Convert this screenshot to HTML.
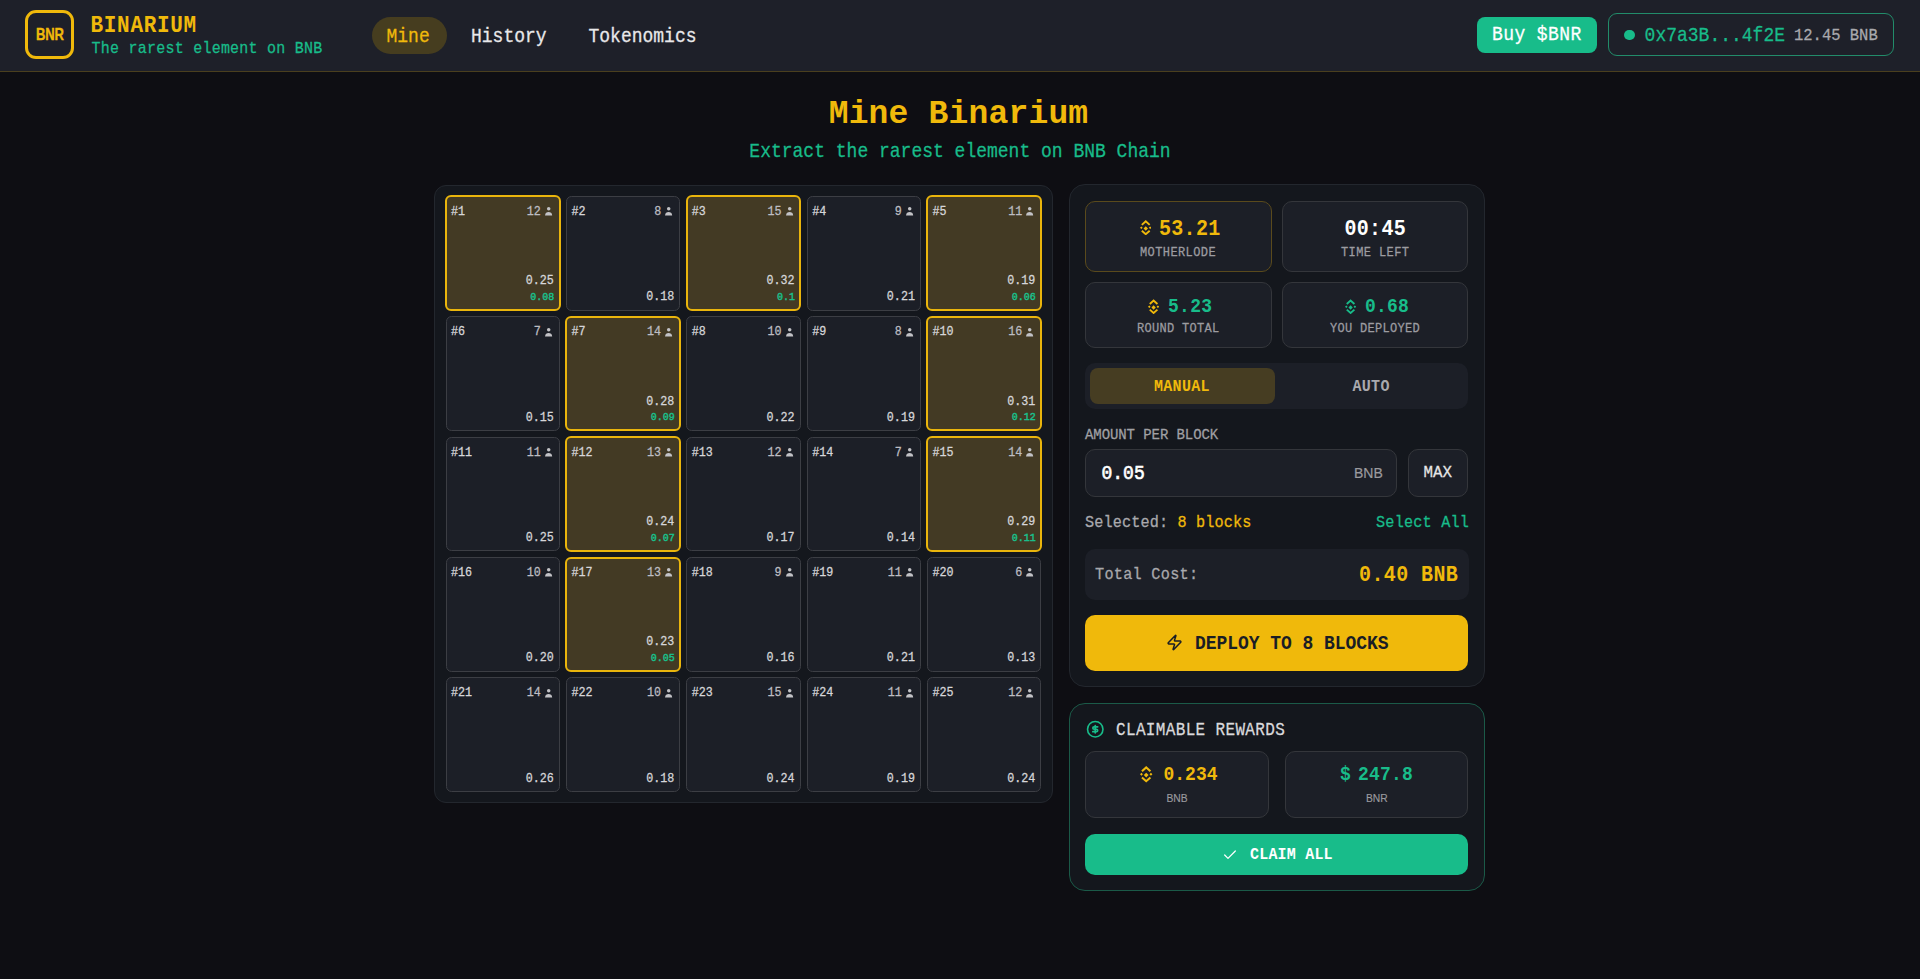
<!DOCTYPE html>
<html><head><meta charset="utf-8">
<style>
*{box-sizing:border-box;margin:0;padding:0}
html,body{width:1920px;height:979px;overflow:hidden;background:#0e0e13;font-family:"Liberation Mono",monospace;color:#e6e6e6}
</style></head><body>
<div style="position:absolute;left:0px;top:0px;width:1920px;height:71px;background:#1e2029;border-radius:0px;border-bottom:1px solid #4a3f1e;box-sizing:content-box;"></div>
<div style="position:absolute;left:25.3px;top:10px;width:48.7px;height:49px;background:transparent;border-radius:11px;border:3px solid #f0b90b;"></div>
<div style="position:absolute;top:29.30px;font-size:13px;color:#f0b90b;font-family:'Liberation Sans',sans-serif;white-space:nowrap;line-height:1;left:36px;font-weight:bold;letter-spacing:-0.2px;transform:scaleY(1.25);transform-origin:0 11.00px;-webkit-text-stroke:0.3px #f0b90b;">BNR</div>
<div style="position:absolute;top:16.01px;font-size:21px;color:#f0b90b;font-family:'Liberation Mono',monospace;white-space:nowrap;line-height:1;left:90.5px;font-weight:bold;letter-spacing:0.7px;transform:scaleY(1.1);transform-origin:0 16.09px;">BINARIUM</div>
<div style="position:absolute;top:41.71px;font-size:15px;color:#18bc8a;font-family:'Liberation Mono',monospace;white-space:nowrap;line-height:1;left:91.5px;letter-spacing:0.24px;transform:scaleY(1.1);transform-origin:0 11.49px;-webkit-text-stroke:0.25px #18bc8a;">The rarest element on BNB</div>
<div style="position:absolute;left:372px;top:17px;width:75px;height:37px;background:#463d1f;border-radius:18.5px;"></div>
<div style="position:absolute;top:28.11px;font-size:18px;color:#f0b90b;font-family:'Liberation Mono',monospace;white-space:nowrap;line-height:1;left:386.5px;transform:scaleY(1.1);transform-origin:0 13.79px;-webkit-text-stroke:0.25px #f0b90b;">Mine</div>
<div style="position:absolute;top:28.11px;font-size:18px;color:#e8e8ea;font-family:'Liberation Mono',monospace;white-space:nowrap;line-height:1;left:471px;transform:scaleY(1.1);transform-origin:0 13.79px;-webkit-text-stroke:0.25px #e8e8ea;">History</div>
<div style="position:absolute;top:28.11px;font-size:18px;color:#e8e8ea;font-family:'Liberation Mono',monospace;white-space:nowrap;line-height:1;left:588.5px;transform:scaleY(1.1);transform-origin:0 13.79px;-webkit-text-stroke:0.25px #e8e8ea;">Tokenomics</div>
<div style="position:absolute;left:1477px;top:17px;width:120px;height:36px;background:#18bc8a;border-radius:8px;"></div>
<div style="position:absolute;top:26.31px;font-size:18px;color:#ffffff;font-family:'Liberation Mono',monospace;white-space:nowrap;line-height:1;left:1492px;letter-spacing:0.4px;transform:scaleY(1.1);transform-origin:0 13.79px;-webkit-text-stroke:0.25px #ffffff;">Buy $BNR</div>
<div style="position:absolute;left:1608px;top:13px;width:286px;height:43px;background:transparent;border-radius:9px;border:1px solid #228c6a;"></div>
<div style="position:absolute;left:1624px;top:29.5px;width:10.5px;height:10.5px;background:#18bc8a;border-radius:5.25px;"></div>
<div style="position:absolute;top:26.71px;font-size:18px;color:#18bc8a;font-family:'Liberation Mono',monospace;white-space:nowrap;line-height:1;left:1644.6px;transform:scaleY(1.1);transform-origin:0 13.79px;-webkit-text-stroke:0.25px #18bc8a;">0x7a3B...4f2E</div>
<div style="position:absolute;top:28.63px;font-size:15.5px;color:#a9a9ad;font-family:'Liberation Mono',monospace;white-space:nowrap;line-height:1;left:1794px;transform:scaleY(1.1);transform-origin:0 11.87px;-webkit-text-stroke:0.25px #a9a9ad;">12.45 BNB</div>
<div style="position:absolute;top:98.32px;font-size:33px;color:#f0b90b;font-family:'Liberation Mono',monospace;white-space:nowrap;line-height:1;left:0;right:0;text-align:center;font-weight:bold;letter-spacing:0.17px;margin-left:-3px;">Mine Binarium</div>
<div style="position:absolute;top:142.91px;font-size:18px;color:#18bc8a;font-family:'Liberation Mono',monospace;white-space:nowrap;line-height:1;left:0;right:0;text-align:center;transform:scaleY(1.1);transform-origin:0 13.79px;-webkit-text-stroke:0.25px #18bc8a;">Extract the rarest element on BNB Chain</div>
<div style="position:absolute;left:434px;top:185px;width:619px;height:618px;background:#14171d;border-radius:12px;border:1px solid #23272e;"></div>
<div style="position:absolute;left:444.95px;top:195.45px;width:115.69999999999999px;height:115.69999999999999px;background:#433a24;border-radius:6px;border:2px solid #eab50c;"></div>
<div style="position:absolute;top:206.84px;font-size:11.7px;color:#d6d6d9;font-family:'Liberation Mono',monospace;white-space:nowrap;line-height:1;left:451.1px;transform:scaleY(1.12);transform-origin:0 8.96px;-webkit-text-stroke:0.25px #d6d6d9;">#1</div>
<div style="position:absolute;top:206.84px;font-size:11.7px;color:#bdbdc2;font-family:'Liberation Mono',monospace;white-space:nowrap;line-height:1;left:526.76px;transform:scaleY(1.12);transform-origin:0 8.96px;-webkit-text-stroke:0.25px #bdbdc2;">12</div>
<svg style="position:absolute;left:545.0px;top:206.3px" width="8" height="10" viewBox="0 0 8 10"><circle cx="3.7" cy="2.7" r="1.75" fill="#c2c2c6"/><path d="M0 9.4 C0.3 6.8 1.6 5.9 3.6 5.9 C5.6 5.9 6.9 6.8 7.2 9.4 Z" fill="#c2c2c6"/></svg>
<div style="position:absolute;top:276.24px;font-size:11.7px;color:#d6d6d9;font-family:'Liberation Mono',monospace;white-space:nowrap;line-height:1;left:525.82px;transform:scaleY(1.12);transform-origin:0 8.96px;-webkit-text-stroke:0.25px #d6d6d9;">0.25</div>
<div style="position:absolute;top:292.94px;font-size:10px;color:#19c08d;font-family:'Liberation Mono',monospace;white-space:nowrap;line-height:1;left:530.3px;transform:scaleY(1.12);transform-origin:0 7.66px;-webkit-text-stroke:0.4px #19c08d;">0.08</div>
<div style="position:absolute;left:565.85px;top:196.0px;width:114.6px;height:114.6px;background:#1c1f27;border-radius:5.5px;border:1px solid #3c3e44;"></div>
<div style="position:absolute;top:206.84px;font-size:11.7px;color:#d6d6d9;font-family:'Liberation Mono',monospace;white-space:nowrap;line-height:1;left:571.45px;transform:scaleY(1.12);transform-origin:0 8.96px;-webkit-text-stroke:0.25px #d6d6d9;">#2</div>
<div style="position:absolute;top:206.84px;font-size:11.7px;color:#bdbdc2;font-family:'Liberation Mono',monospace;white-space:nowrap;line-height:1;left:654.13px;transform:scaleY(1.12);transform-origin:0 8.96px;-webkit-text-stroke:0.25px #bdbdc2;">8</div>
<svg style="position:absolute;left:665.35px;top:206.3px" width="8" height="10" viewBox="0 0 8 10"><circle cx="3.7" cy="2.7" r="1.75" fill="#c2c2c6"/><path d="M0 9.4 C0.3 6.8 1.6 5.9 3.6 5.9 C5.6 5.9 6.9 6.8 7.2 9.4 Z" fill="#c2c2c6"/></svg>
<div style="position:absolute;top:292.24px;font-size:11.7px;color:#d6d6d9;font-family:'Liberation Mono',monospace;white-space:nowrap;line-height:1;left:646.17px;transform:scaleY(1.12);transform-origin:0 8.96px;-webkit-text-stroke:0.25px #d6d6d9;">0.18</div>
<div style="position:absolute;left:685.65px;top:195.45px;width:115.69999999999999px;height:115.69999999999999px;background:#433a24;border-radius:6px;border:2px solid #eab50c;"></div>
<div style="position:absolute;top:206.84px;font-size:11.7px;color:#d6d6d9;font-family:'Liberation Mono',monospace;white-space:nowrap;line-height:1;left:691.8px;transform:scaleY(1.12);transform-origin:0 8.96px;-webkit-text-stroke:0.25px #d6d6d9;">#3</div>
<div style="position:absolute;top:206.84px;font-size:11.7px;color:#bdbdc2;font-family:'Liberation Mono',monospace;white-space:nowrap;line-height:1;left:767.46px;transform:scaleY(1.12);transform-origin:0 8.96px;-webkit-text-stroke:0.25px #bdbdc2;">15</div>
<svg style="position:absolute;left:785.7px;top:206.3px" width="8" height="10" viewBox="0 0 8 10"><circle cx="3.7" cy="2.7" r="1.75" fill="#c2c2c6"/><path d="M0 9.4 C0.3 6.8 1.6 5.9 3.6 5.9 C5.6 5.9 6.9 6.8 7.2 9.4 Z" fill="#c2c2c6"/></svg>
<div style="position:absolute;top:276.24px;font-size:11.7px;color:#d6d6d9;font-family:'Liberation Mono',monospace;white-space:nowrap;line-height:1;left:766.52px;transform:scaleY(1.12);transform-origin:0 8.96px;-webkit-text-stroke:0.25px #d6d6d9;">0.32</div>
<div style="position:absolute;top:292.94px;font-size:10px;color:#19c08d;font-family:'Liberation Mono',monospace;white-space:nowrap;line-height:1;left:777.0px;transform:scaleY(1.12);transform-origin:0 7.66px;-webkit-text-stroke:0.4px #19c08d;">0.1</div>
<div style="position:absolute;left:806.55px;top:196.0px;width:114.6px;height:114.6px;background:#1c1f27;border-radius:5.5px;border:1px solid #3c3e44;"></div>
<div style="position:absolute;top:206.84px;font-size:11.7px;color:#d6d6d9;font-family:'Liberation Mono',monospace;white-space:nowrap;line-height:1;left:812.15px;transform:scaleY(1.12);transform-origin:0 8.96px;-webkit-text-stroke:0.25px #d6d6d9;">#4</div>
<div style="position:absolute;top:206.84px;font-size:11.7px;color:#bdbdc2;font-family:'Liberation Mono',monospace;white-space:nowrap;line-height:1;left:894.83px;transform:scaleY(1.12);transform-origin:0 8.96px;-webkit-text-stroke:0.25px #bdbdc2;">9</div>
<svg style="position:absolute;left:906.05px;top:206.3px" width="8" height="10" viewBox="0 0 8 10"><circle cx="3.7" cy="2.7" r="1.75" fill="#c2c2c6"/><path d="M0 9.4 C0.3 6.8 1.6 5.9 3.6 5.9 C5.6 5.9 6.9 6.8 7.2 9.4 Z" fill="#c2c2c6"/></svg>
<div style="position:absolute;top:292.24px;font-size:11.7px;color:#d6d6d9;font-family:'Liberation Mono',monospace;white-space:nowrap;line-height:1;left:886.87px;transform:scaleY(1.12);transform-origin:0 8.96px;-webkit-text-stroke:0.25px #d6d6d9;">0.21</div>
<div style="position:absolute;left:926.35px;top:195.45px;width:115.69999999999999px;height:115.69999999999999px;background:#433a24;border-radius:6px;border:2px solid #eab50c;"></div>
<div style="position:absolute;top:206.84px;font-size:11.7px;color:#d6d6d9;font-family:'Liberation Mono',monospace;white-space:nowrap;line-height:1;left:932.5px;transform:scaleY(1.12);transform-origin:0 8.96px;-webkit-text-stroke:0.25px #d6d6d9;">#5</div>
<div style="position:absolute;top:206.84px;font-size:11.7px;color:#bdbdc2;font-family:'Liberation Mono',monospace;white-space:nowrap;line-height:1;left:1008.16px;transform:scaleY(1.12);transform-origin:0 8.96px;-webkit-text-stroke:0.25px #bdbdc2;">11</div>
<svg style="position:absolute;left:1026.4px;top:206.3px" width="8" height="10" viewBox="0 0 8 10"><circle cx="3.7" cy="2.7" r="1.75" fill="#c2c2c6"/><path d="M0 9.4 C0.3 6.8 1.6 5.9 3.6 5.9 C5.6 5.9 6.9 6.8 7.2 9.4 Z" fill="#c2c2c6"/></svg>
<div style="position:absolute;top:276.24px;font-size:11.7px;color:#d6d6d9;font-family:'Liberation Mono',monospace;white-space:nowrap;line-height:1;left:1007.22px;transform:scaleY(1.12);transform-origin:0 8.96px;-webkit-text-stroke:0.25px #d6d6d9;">0.19</div>
<div style="position:absolute;top:292.94px;font-size:10px;color:#19c08d;font-family:'Liberation Mono',monospace;white-space:nowrap;line-height:1;left:1011.7px;transform:scaleY(1.12);transform-origin:0 7.66px;-webkit-text-stroke:0.4px #19c08d;">0.06</div>
<div style="position:absolute;left:445.5px;top:316.35px;width:114.6px;height:114.6px;background:#1c1f27;border-radius:5.5px;border:1px solid #3c3e44;"></div>
<div style="position:absolute;top:327.19px;font-size:11.7px;color:#d6d6d9;font-family:'Liberation Mono',monospace;white-space:nowrap;line-height:1;left:451.1px;transform:scaleY(1.12);transform-origin:0 8.96px;-webkit-text-stroke:0.25px #d6d6d9;">#6</div>
<div style="position:absolute;top:327.19px;font-size:11.7px;color:#bdbdc2;font-family:'Liberation Mono',monospace;white-space:nowrap;line-height:1;left:533.78px;transform:scaleY(1.12);transform-origin:0 8.96px;-webkit-text-stroke:0.25px #bdbdc2;">7</div>
<svg style="position:absolute;left:545.0px;top:326.65px" width="8" height="10" viewBox="0 0 8 10"><circle cx="3.7" cy="2.7" r="1.75" fill="#c2c2c6"/><path d="M0 9.4 C0.3 6.8 1.6 5.9 3.6 5.9 C5.6 5.9 6.9 6.8 7.2 9.4 Z" fill="#c2c2c6"/></svg>
<div style="position:absolute;top:412.59px;font-size:11.7px;color:#d6d6d9;font-family:'Liberation Mono',monospace;white-space:nowrap;line-height:1;left:525.82px;transform:scaleY(1.12);transform-origin:0 8.96px;-webkit-text-stroke:0.25px #d6d6d9;">0.15</div>
<div style="position:absolute;left:565.3px;top:315.8px;width:115.69999999999999px;height:115.69999999999999px;background:#433a24;border-radius:6px;border:2px solid #eab50c;"></div>
<div style="position:absolute;top:327.19px;font-size:11.7px;color:#d6d6d9;font-family:'Liberation Mono',monospace;white-space:nowrap;line-height:1;left:571.45px;transform:scaleY(1.12);transform-origin:0 8.96px;-webkit-text-stroke:0.25px #d6d6d9;">#7</div>
<div style="position:absolute;top:327.19px;font-size:11.7px;color:#bdbdc2;font-family:'Liberation Mono',monospace;white-space:nowrap;line-height:1;left:647.11px;transform:scaleY(1.12);transform-origin:0 8.96px;-webkit-text-stroke:0.25px #bdbdc2;">14</div>
<svg style="position:absolute;left:665.35px;top:326.65px" width="8" height="10" viewBox="0 0 8 10"><circle cx="3.7" cy="2.7" r="1.75" fill="#c2c2c6"/><path d="M0 9.4 C0.3 6.8 1.6 5.9 3.6 5.9 C5.6 5.9 6.9 6.8 7.2 9.4 Z" fill="#c2c2c6"/></svg>
<div style="position:absolute;top:396.59px;font-size:11.7px;color:#d6d6d9;font-family:'Liberation Mono',monospace;white-space:nowrap;line-height:1;left:646.17px;transform:scaleY(1.12);transform-origin:0 8.96px;-webkit-text-stroke:0.25px #d6d6d9;">0.28</div>
<div style="position:absolute;top:413.29px;font-size:10px;color:#19c08d;font-family:'Liberation Mono',monospace;white-space:nowrap;line-height:1;left:650.65px;transform:scaleY(1.12);transform-origin:0 7.66px;-webkit-text-stroke:0.4px #19c08d;">0.09</div>
<div style="position:absolute;left:686.2px;top:316.35px;width:114.6px;height:114.6px;background:#1c1f27;border-radius:5.5px;border:1px solid #3c3e44;"></div>
<div style="position:absolute;top:327.19px;font-size:11.7px;color:#d6d6d9;font-family:'Liberation Mono',monospace;white-space:nowrap;line-height:1;left:691.8px;transform:scaleY(1.12);transform-origin:0 8.96px;-webkit-text-stroke:0.25px #d6d6d9;">#8</div>
<div style="position:absolute;top:327.19px;font-size:11.7px;color:#bdbdc2;font-family:'Liberation Mono',monospace;white-space:nowrap;line-height:1;left:767.46px;transform:scaleY(1.12);transform-origin:0 8.96px;-webkit-text-stroke:0.25px #bdbdc2;">10</div>
<svg style="position:absolute;left:785.7px;top:326.65px" width="8" height="10" viewBox="0 0 8 10"><circle cx="3.7" cy="2.7" r="1.75" fill="#c2c2c6"/><path d="M0 9.4 C0.3 6.8 1.6 5.9 3.6 5.9 C5.6 5.9 6.9 6.8 7.2 9.4 Z" fill="#c2c2c6"/></svg>
<div style="position:absolute;top:412.59px;font-size:11.7px;color:#d6d6d9;font-family:'Liberation Mono',monospace;white-space:nowrap;line-height:1;left:766.52px;transform:scaleY(1.12);transform-origin:0 8.96px;-webkit-text-stroke:0.25px #d6d6d9;">0.22</div>
<div style="position:absolute;left:806.55px;top:316.35px;width:114.6px;height:114.6px;background:#1c1f27;border-radius:5.5px;border:1px solid #3c3e44;"></div>
<div style="position:absolute;top:327.19px;font-size:11.7px;color:#d6d6d9;font-family:'Liberation Mono',monospace;white-space:nowrap;line-height:1;left:812.15px;transform:scaleY(1.12);transform-origin:0 8.96px;-webkit-text-stroke:0.25px #d6d6d9;">#9</div>
<div style="position:absolute;top:327.19px;font-size:11.7px;color:#bdbdc2;font-family:'Liberation Mono',monospace;white-space:nowrap;line-height:1;left:894.83px;transform:scaleY(1.12);transform-origin:0 8.96px;-webkit-text-stroke:0.25px #bdbdc2;">8</div>
<svg style="position:absolute;left:906.05px;top:326.65px" width="8" height="10" viewBox="0 0 8 10"><circle cx="3.7" cy="2.7" r="1.75" fill="#c2c2c6"/><path d="M0 9.4 C0.3 6.8 1.6 5.9 3.6 5.9 C5.6 5.9 6.9 6.8 7.2 9.4 Z" fill="#c2c2c6"/></svg>
<div style="position:absolute;top:412.59px;font-size:11.7px;color:#d6d6d9;font-family:'Liberation Mono',monospace;white-space:nowrap;line-height:1;left:886.87px;transform:scaleY(1.12);transform-origin:0 8.96px;-webkit-text-stroke:0.25px #d6d6d9;">0.19</div>
<div style="position:absolute;left:926.35px;top:315.8px;width:115.69999999999999px;height:115.69999999999999px;background:#433a24;border-radius:6px;border:2px solid #eab50c;"></div>
<div style="position:absolute;top:327.19px;font-size:11.7px;color:#d6d6d9;font-family:'Liberation Mono',monospace;white-space:nowrap;line-height:1;left:932.5px;transform:scaleY(1.12);transform-origin:0 8.96px;-webkit-text-stroke:0.25px #d6d6d9;">#10</div>
<div style="position:absolute;top:327.19px;font-size:11.7px;color:#bdbdc2;font-family:'Liberation Mono',monospace;white-space:nowrap;line-height:1;left:1008.16px;transform:scaleY(1.12);transform-origin:0 8.96px;-webkit-text-stroke:0.25px #bdbdc2;">16</div>
<svg style="position:absolute;left:1026.4px;top:326.65px" width="8" height="10" viewBox="0 0 8 10"><circle cx="3.7" cy="2.7" r="1.75" fill="#c2c2c6"/><path d="M0 9.4 C0.3 6.8 1.6 5.9 3.6 5.9 C5.6 5.9 6.9 6.8 7.2 9.4 Z" fill="#c2c2c6"/></svg>
<div style="position:absolute;top:396.59px;font-size:11.7px;color:#d6d6d9;font-family:'Liberation Mono',monospace;white-space:nowrap;line-height:1;left:1007.22px;transform:scaleY(1.12);transform-origin:0 8.96px;-webkit-text-stroke:0.25px #d6d6d9;">0.31</div>
<div style="position:absolute;top:413.29px;font-size:10px;color:#19c08d;font-family:'Liberation Mono',monospace;white-space:nowrap;line-height:1;left:1011.7px;transform:scaleY(1.12);transform-origin:0 7.66px;-webkit-text-stroke:0.4px #19c08d;">0.12</div>
<div style="position:absolute;left:445.5px;top:436.7px;width:114.6px;height:114.6px;background:#1c1f27;border-radius:5.5px;border:1px solid #3c3e44;"></div>
<div style="position:absolute;top:447.54px;font-size:11.7px;color:#d6d6d9;font-family:'Liberation Mono',monospace;white-space:nowrap;line-height:1;left:451.1px;transform:scaleY(1.12);transform-origin:0 8.96px;-webkit-text-stroke:0.25px #d6d6d9;">#11</div>
<div style="position:absolute;top:447.54px;font-size:11.7px;color:#bdbdc2;font-family:'Liberation Mono',monospace;white-space:nowrap;line-height:1;left:526.76px;transform:scaleY(1.12);transform-origin:0 8.96px;-webkit-text-stroke:0.25px #bdbdc2;">11</div>
<svg style="position:absolute;left:545.0px;top:447.0px" width="8" height="10" viewBox="0 0 8 10"><circle cx="3.7" cy="2.7" r="1.75" fill="#c2c2c6"/><path d="M0 9.4 C0.3 6.8 1.6 5.9 3.6 5.9 C5.6 5.9 6.9 6.8 7.2 9.4 Z" fill="#c2c2c6"/></svg>
<div style="position:absolute;top:532.94px;font-size:11.7px;color:#d6d6d9;font-family:'Liberation Mono',monospace;white-space:nowrap;line-height:1;left:525.82px;transform:scaleY(1.12);transform-origin:0 8.96px;-webkit-text-stroke:0.25px #d6d6d9;">0.25</div>
<div style="position:absolute;left:565.3px;top:436.15px;width:115.69999999999999px;height:115.69999999999999px;background:#433a24;border-radius:6px;border:2px solid #eab50c;"></div>
<div style="position:absolute;top:447.54px;font-size:11.7px;color:#d6d6d9;font-family:'Liberation Mono',monospace;white-space:nowrap;line-height:1;left:571.45px;transform:scaleY(1.12);transform-origin:0 8.96px;-webkit-text-stroke:0.25px #d6d6d9;">#12</div>
<div style="position:absolute;top:447.54px;font-size:11.7px;color:#bdbdc2;font-family:'Liberation Mono',monospace;white-space:nowrap;line-height:1;left:647.11px;transform:scaleY(1.12);transform-origin:0 8.96px;-webkit-text-stroke:0.25px #bdbdc2;">13</div>
<svg style="position:absolute;left:665.35px;top:447.0px" width="8" height="10" viewBox="0 0 8 10"><circle cx="3.7" cy="2.7" r="1.75" fill="#c2c2c6"/><path d="M0 9.4 C0.3 6.8 1.6 5.9 3.6 5.9 C5.6 5.9 6.9 6.8 7.2 9.4 Z" fill="#c2c2c6"/></svg>
<div style="position:absolute;top:516.94px;font-size:11.7px;color:#d6d6d9;font-family:'Liberation Mono',monospace;white-space:nowrap;line-height:1;left:646.17px;transform:scaleY(1.12);transform-origin:0 8.96px;-webkit-text-stroke:0.25px #d6d6d9;">0.24</div>
<div style="position:absolute;top:533.64px;font-size:10px;color:#19c08d;font-family:'Liberation Mono',monospace;white-space:nowrap;line-height:1;left:650.65px;transform:scaleY(1.12);transform-origin:0 7.66px;-webkit-text-stroke:0.4px #19c08d;">0.07</div>
<div style="position:absolute;left:686.2px;top:436.7px;width:114.6px;height:114.6px;background:#1c1f27;border-radius:5.5px;border:1px solid #3c3e44;"></div>
<div style="position:absolute;top:447.54px;font-size:11.7px;color:#d6d6d9;font-family:'Liberation Mono',monospace;white-space:nowrap;line-height:1;left:691.8px;transform:scaleY(1.12);transform-origin:0 8.96px;-webkit-text-stroke:0.25px #d6d6d9;">#13</div>
<div style="position:absolute;top:447.54px;font-size:11.7px;color:#bdbdc2;font-family:'Liberation Mono',monospace;white-space:nowrap;line-height:1;left:767.46px;transform:scaleY(1.12);transform-origin:0 8.96px;-webkit-text-stroke:0.25px #bdbdc2;">12</div>
<svg style="position:absolute;left:785.7px;top:447.0px" width="8" height="10" viewBox="0 0 8 10"><circle cx="3.7" cy="2.7" r="1.75" fill="#c2c2c6"/><path d="M0 9.4 C0.3 6.8 1.6 5.9 3.6 5.9 C5.6 5.9 6.9 6.8 7.2 9.4 Z" fill="#c2c2c6"/></svg>
<div style="position:absolute;top:532.94px;font-size:11.7px;color:#d6d6d9;font-family:'Liberation Mono',monospace;white-space:nowrap;line-height:1;left:766.52px;transform:scaleY(1.12);transform-origin:0 8.96px;-webkit-text-stroke:0.25px #d6d6d9;">0.17</div>
<div style="position:absolute;left:806.55px;top:436.7px;width:114.6px;height:114.6px;background:#1c1f27;border-radius:5.5px;border:1px solid #3c3e44;"></div>
<div style="position:absolute;top:447.54px;font-size:11.7px;color:#d6d6d9;font-family:'Liberation Mono',monospace;white-space:nowrap;line-height:1;left:812.15px;transform:scaleY(1.12);transform-origin:0 8.96px;-webkit-text-stroke:0.25px #d6d6d9;">#14</div>
<div style="position:absolute;top:447.54px;font-size:11.7px;color:#bdbdc2;font-family:'Liberation Mono',monospace;white-space:nowrap;line-height:1;left:894.83px;transform:scaleY(1.12);transform-origin:0 8.96px;-webkit-text-stroke:0.25px #bdbdc2;">7</div>
<svg style="position:absolute;left:906.05px;top:447.0px" width="8" height="10" viewBox="0 0 8 10"><circle cx="3.7" cy="2.7" r="1.75" fill="#c2c2c6"/><path d="M0 9.4 C0.3 6.8 1.6 5.9 3.6 5.9 C5.6 5.9 6.9 6.8 7.2 9.4 Z" fill="#c2c2c6"/></svg>
<div style="position:absolute;top:532.94px;font-size:11.7px;color:#d6d6d9;font-family:'Liberation Mono',monospace;white-space:nowrap;line-height:1;left:886.87px;transform:scaleY(1.12);transform-origin:0 8.96px;-webkit-text-stroke:0.25px #d6d6d9;">0.14</div>
<div style="position:absolute;left:926.35px;top:436.15px;width:115.69999999999999px;height:115.69999999999999px;background:#433a24;border-radius:6px;border:2px solid #eab50c;"></div>
<div style="position:absolute;top:447.54px;font-size:11.7px;color:#d6d6d9;font-family:'Liberation Mono',monospace;white-space:nowrap;line-height:1;left:932.5px;transform:scaleY(1.12);transform-origin:0 8.96px;-webkit-text-stroke:0.25px #d6d6d9;">#15</div>
<div style="position:absolute;top:447.54px;font-size:11.7px;color:#bdbdc2;font-family:'Liberation Mono',monospace;white-space:nowrap;line-height:1;left:1008.16px;transform:scaleY(1.12);transform-origin:0 8.96px;-webkit-text-stroke:0.25px #bdbdc2;">14</div>
<svg style="position:absolute;left:1026.4px;top:447.0px" width="8" height="10" viewBox="0 0 8 10"><circle cx="3.7" cy="2.7" r="1.75" fill="#c2c2c6"/><path d="M0 9.4 C0.3 6.8 1.6 5.9 3.6 5.9 C5.6 5.9 6.9 6.8 7.2 9.4 Z" fill="#c2c2c6"/></svg>
<div style="position:absolute;top:516.94px;font-size:11.7px;color:#d6d6d9;font-family:'Liberation Mono',monospace;white-space:nowrap;line-height:1;left:1007.22px;transform:scaleY(1.12);transform-origin:0 8.96px;-webkit-text-stroke:0.25px #d6d6d9;">0.29</div>
<div style="position:absolute;top:533.64px;font-size:10px;color:#19c08d;font-family:'Liberation Mono',monospace;white-space:nowrap;line-height:1;left:1011.7px;transform:scaleY(1.12);transform-origin:0 7.66px;-webkit-text-stroke:0.4px #19c08d;">0.11</div>
<div style="position:absolute;left:445.5px;top:557.05px;width:114.6px;height:114.6px;background:#1c1f27;border-radius:5.5px;border:1px solid #3c3e44;"></div>
<div style="position:absolute;top:567.89px;font-size:11.7px;color:#d6d6d9;font-family:'Liberation Mono',monospace;white-space:nowrap;line-height:1;left:451.1px;transform:scaleY(1.12);transform-origin:0 8.96px;-webkit-text-stroke:0.25px #d6d6d9;">#16</div>
<div style="position:absolute;top:567.89px;font-size:11.7px;color:#bdbdc2;font-family:'Liberation Mono',monospace;white-space:nowrap;line-height:1;left:526.76px;transform:scaleY(1.12);transform-origin:0 8.96px;-webkit-text-stroke:0.25px #bdbdc2;">10</div>
<svg style="position:absolute;left:545.0px;top:567.35px" width="8" height="10" viewBox="0 0 8 10"><circle cx="3.7" cy="2.7" r="1.75" fill="#c2c2c6"/><path d="M0 9.4 C0.3 6.8 1.6 5.9 3.6 5.9 C5.6 5.9 6.9 6.8 7.2 9.4 Z" fill="#c2c2c6"/></svg>
<div style="position:absolute;top:653.29px;font-size:11.7px;color:#d6d6d9;font-family:'Liberation Mono',monospace;white-space:nowrap;line-height:1;left:525.82px;transform:scaleY(1.12);transform-origin:0 8.96px;-webkit-text-stroke:0.25px #d6d6d9;">0.20</div>
<div style="position:absolute;left:565.3px;top:556.5px;width:115.69999999999999px;height:115.69999999999999px;background:#433a24;border-radius:6px;border:2px solid #eab50c;"></div>
<div style="position:absolute;top:567.89px;font-size:11.7px;color:#d6d6d9;font-family:'Liberation Mono',monospace;white-space:nowrap;line-height:1;left:571.45px;transform:scaleY(1.12);transform-origin:0 8.96px;-webkit-text-stroke:0.25px #d6d6d9;">#17</div>
<div style="position:absolute;top:567.89px;font-size:11.7px;color:#bdbdc2;font-family:'Liberation Mono',monospace;white-space:nowrap;line-height:1;left:647.11px;transform:scaleY(1.12);transform-origin:0 8.96px;-webkit-text-stroke:0.25px #bdbdc2;">13</div>
<svg style="position:absolute;left:665.35px;top:567.35px" width="8" height="10" viewBox="0 0 8 10"><circle cx="3.7" cy="2.7" r="1.75" fill="#c2c2c6"/><path d="M0 9.4 C0.3 6.8 1.6 5.9 3.6 5.9 C5.6 5.9 6.9 6.8 7.2 9.4 Z" fill="#c2c2c6"/></svg>
<div style="position:absolute;top:637.29px;font-size:11.7px;color:#d6d6d9;font-family:'Liberation Mono',monospace;white-space:nowrap;line-height:1;left:646.17px;transform:scaleY(1.12);transform-origin:0 8.96px;-webkit-text-stroke:0.25px #d6d6d9;">0.23</div>
<div style="position:absolute;top:653.99px;font-size:10px;color:#19c08d;font-family:'Liberation Mono',monospace;white-space:nowrap;line-height:1;left:650.65px;transform:scaleY(1.12);transform-origin:0 7.66px;-webkit-text-stroke:0.4px #19c08d;">0.05</div>
<div style="position:absolute;left:686.2px;top:557.05px;width:114.6px;height:114.6px;background:#1c1f27;border-radius:5.5px;border:1px solid #3c3e44;"></div>
<div style="position:absolute;top:567.89px;font-size:11.7px;color:#d6d6d9;font-family:'Liberation Mono',monospace;white-space:nowrap;line-height:1;left:691.8px;transform:scaleY(1.12);transform-origin:0 8.96px;-webkit-text-stroke:0.25px #d6d6d9;">#18</div>
<div style="position:absolute;top:567.89px;font-size:11.7px;color:#bdbdc2;font-family:'Liberation Mono',monospace;white-space:nowrap;line-height:1;left:774.48px;transform:scaleY(1.12);transform-origin:0 8.96px;-webkit-text-stroke:0.25px #bdbdc2;">9</div>
<svg style="position:absolute;left:785.7px;top:567.35px" width="8" height="10" viewBox="0 0 8 10"><circle cx="3.7" cy="2.7" r="1.75" fill="#c2c2c6"/><path d="M0 9.4 C0.3 6.8 1.6 5.9 3.6 5.9 C5.6 5.9 6.9 6.8 7.2 9.4 Z" fill="#c2c2c6"/></svg>
<div style="position:absolute;top:653.29px;font-size:11.7px;color:#d6d6d9;font-family:'Liberation Mono',monospace;white-space:nowrap;line-height:1;left:766.52px;transform:scaleY(1.12);transform-origin:0 8.96px;-webkit-text-stroke:0.25px #d6d6d9;">0.16</div>
<div style="position:absolute;left:806.55px;top:557.05px;width:114.6px;height:114.6px;background:#1c1f27;border-radius:5.5px;border:1px solid #3c3e44;"></div>
<div style="position:absolute;top:567.89px;font-size:11.7px;color:#d6d6d9;font-family:'Liberation Mono',monospace;white-space:nowrap;line-height:1;left:812.15px;transform:scaleY(1.12);transform-origin:0 8.96px;-webkit-text-stroke:0.25px #d6d6d9;">#19</div>
<div style="position:absolute;top:567.89px;font-size:11.7px;color:#bdbdc2;font-family:'Liberation Mono',monospace;white-space:nowrap;line-height:1;left:887.81px;transform:scaleY(1.12);transform-origin:0 8.96px;-webkit-text-stroke:0.25px #bdbdc2;">11</div>
<svg style="position:absolute;left:906.05px;top:567.35px" width="8" height="10" viewBox="0 0 8 10"><circle cx="3.7" cy="2.7" r="1.75" fill="#c2c2c6"/><path d="M0 9.4 C0.3 6.8 1.6 5.9 3.6 5.9 C5.6 5.9 6.9 6.8 7.2 9.4 Z" fill="#c2c2c6"/></svg>
<div style="position:absolute;top:653.29px;font-size:11.7px;color:#d6d6d9;font-family:'Liberation Mono',monospace;white-space:nowrap;line-height:1;left:886.87px;transform:scaleY(1.12);transform-origin:0 8.96px;-webkit-text-stroke:0.25px #d6d6d9;">0.21</div>
<div style="position:absolute;left:926.9px;top:557.05px;width:114.6px;height:114.6px;background:#1c1f27;border-radius:5.5px;border:1px solid #3c3e44;"></div>
<div style="position:absolute;top:567.89px;font-size:11.7px;color:#d6d6d9;font-family:'Liberation Mono',monospace;white-space:nowrap;line-height:1;left:932.5px;transform:scaleY(1.12);transform-origin:0 8.96px;-webkit-text-stroke:0.25px #d6d6d9;">#20</div>
<div style="position:absolute;top:567.89px;font-size:11.7px;color:#bdbdc2;font-family:'Liberation Mono',monospace;white-space:nowrap;line-height:1;left:1015.18px;transform:scaleY(1.12);transform-origin:0 8.96px;-webkit-text-stroke:0.25px #bdbdc2;">6</div>
<svg style="position:absolute;left:1026.4px;top:567.35px" width="8" height="10" viewBox="0 0 8 10"><circle cx="3.7" cy="2.7" r="1.75" fill="#c2c2c6"/><path d="M0 9.4 C0.3 6.8 1.6 5.9 3.6 5.9 C5.6 5.9 6.9 6.8 7.2 9.4 Z" fill="#c2c2c6"/></svg>
<div style="position:absolute;top:653.29px;font-size:11.7px;color:#d6d6d9;font-family:'Liberation Mono',monospace;white-space:nowrap;line-height:1;left:1007.22px;transform:scaleY(1.12);transform-origin:0 8.96px;-webkit-text-stroke:0.25px #d6d6d9;">0.13</div>
<div style="position:absolute;left:445.5px;top:677.4px;width:114.6px;height:114.6px;background:#1c1f27;border-radius:5.5px;border:1px solid #3c3e44;"></div>
<div style="position:absolute;top:688.24px;font-size:11.7px;color:#d6d6d9;font-family:'Liberation Mono',monospace;white-space:nowrap;line-height:1;left:451.1px;transform:scaleY(1.12);transform-origin:0 8.96px;-webkit-text-stroke:0.25px #d6d6d9;">#21</div>
<div style="position:absolute;top:688.24px;font-size:11.7px;color:#bdbdc2;font-family:'Liberation Mono',monospace;white-space:nowrap;line-height:1;left:526.76px;transform:scaleY(1.12);transform-origin:0 8.96px;-webkit-text-stroke:0.25px #bdbdc2;">14</div>
<svg style="position:absolute;left:545.0px;top:687.7px" width="8" height="10" viewBox="0 0 8 10"><circle cx="3.7" cy="2.7" r="1.75" fill="#c2c2c6"/><path d="M0 9.4 C0.3 6.8 1.6 5.9 3.6 5.9 C5.6 5.9 6.9 6.8 7.2 9.4 Z" fill="#c2c2c6"/></svg>
<div style="position:absolute;top:773.64px;font-size:11.7px;color:#d6d6d9;font-family:'Liberation Mono',monospace;white-space:nowrap;line-height:1;left:525.82px;transform:scaleY(1.12);transform-origin:0 8.96px;-webkit-text-stroke:0.25px #d6d6d9;">0.26</div>
<div style="position:absolute;left:565.85px;top:677.4px;width:114.6px;height:114.6px;background:#1c1f27;border-radius:5.5px;border:1px solid #3c3e44;"></div>
<div style="position:absolute;top:688.24px;font-size:11.7px;color:#d6d6d9;font-family:'Liberation Mono',monospace;white-space:nowrap;line-height:1;left:571.45px;transform:scaleY(1.12);transform-origin:0 8.96px;-webkit-text-stroke:0.25px #d6d6d9;">#22</div>
<div style="position:absolute;top:688.24px;font-size:11.7px;color:#bdbdc2;font-family:'Liberation Mono',monospace;white-space:nowrap;line-height:1;left:647.11px;transform:scaleY(1.12);transform-origin:0 8.96px;-webkit-text-stroke:0.25px #bdbdc2;">10</div>
<svg style="position:absolute;left:665.35px;top:687.7px" width="8" height="10" viewBox="0 0 8 10"><circle cx="3.7" cy="2.7" r="1.75" fill="#c2c2c6"/><path d="M0 9.4 C0.3 6.8 1.6 5.9 3.6 5.9 C5.6 5.9 6.9 6.8 7.2 9.4 Z" fill="#c2c2c6"/></svg>
<div style="position:absolute;top:773.64px;font-size:11.7px;color:#d6d6d9;font-family:'Liberation Mono',monospace;white-space:nowrap;line-height:1;left:646.17px;transform:scaleY(1.12);transform-origin:0 8.96px;-webkit-text-stroke:0.25px #d6d6d9;">0.18</div>
<div style="position:absolute;left:686.2px;top:677.4px;width:114.6px;height:114.6px;background:#1c1f27;border-radius:5.5px;border:1px solid #3c3e44;"></div>
<div style="position:absolute;top:688.24px;font-size:11.7px;color:#d6d6d9;font-family:'Liberation Mono',monospace;white-space:nowrap;line-height:1;left:691.8px;transform:scaleY(1.12);transform-origin:0 8.96px;-webkit-text-stroke:0.25px #d6d6d9;">#23</div>
<div style="position:absolute;top:688.24px;font-size:11.7px;color:#bdbdc2;font-family:'Liberation Mono',monospace;white-space:nowrap;line-height:1;left:767.46px;transform:scaleY(1.12);transform-origin:0 8.96px;-webkit-text-stroke:0.25px #bdbdc2;">15</div>
<svg style="position:absolute;left:785.7px;top:687.7px" width="8" height="10" viewBox="0 0 8 10"><circle cx="3.7" cy="2.7" r="1.75" fill="#c2c2c6"/><path d="M0 9.4 C0.3 6.8 1.6 5.9 3.6 5.9 C5.6 5.9 6.9 6.8 7.2 9.4 Z" fill="#c2c2c6"/></svg>
<div style="position:absolute;top:773.64px;font-size:11.7px;color:#d6d6d9;font-family:'Liberation Mono',monospace;white-space:nowrap;line-height:1;left:766.52px;transform:scaleY(1.12);transform-origin:0 8.96px;-webkit-text-stroke:0.25px #d6d6d9;">0.24</div>
<div style="position:absolute;left:806.55px;top:677.4px;width:114.6px;height:114.6px;background:#1c1f27;border-radius:5.5px;border:1px solid #3c3e44;"></div>
<div style="position:absolute;top:688.24px;font-size:11.7px;color:#d6d6d9;font-family:'Liberation Mono',monospace;white-space:nowrap;line-height:1;left:812.15px;transform:scaleY(1.12);transform-origin:0 8.96px;-webkit-text-stroke:0.25px #d6d6d9;">#24</div>
<div style="position:absolute;top:688.24px;font-size:11.7px;color:#bdbdc2;font-family:'Liberation Mono',monospace;white-space:nowrap;line-height:1;left:887.81px;transform:scaleY(1.12);transform-origin:0 8.96px;-webkit-text-stroke:0.25px #bdbdc2;">11</div>
<svg style="position:absolute;left:906.05px;top:687.7px" width="8" height="10" viewBox="0 0 8 10"><circle cx="3.7" cy="2.7" r="1.75" fill="#c2c2c6"/><path d="M0 9.4 C0.3 6.8 1.6 5.9 3.6 5.9 C5.6 5.9 6.9 6.8 7.2 9.4 Z" fill="#c2c2c6"/></svg>
<div style="position:absolute;top:773.64px;font-size:11.7px;color:#d6d6d9;font-family:'Liberation Mono',monospace;white-space:nowrap;line-height:1;left:886.87px;transform:scaleY(1.12);transform-origin:0 8.96px;-webkit-text-stroke:0.25px #d6d6d9;">0.19</div>
<div style="position:absolute;left:926.9px;top:677.4px;width:114.6px;height:114.6px;background:#1c1f27;border-radius:5.5px;border:1px solid #3c3e44;"></div>
<div style="position:absolute;top:688.24px;font-size:11.7px;color:#d6d6d9;font-family:'Liberation Mono',monospace;white-space:nowrap;line-height:1;left:932.5px;transform:scaleY(1.12);transform-origin:0 8.96px;-webkit-text-stroke:0.25px #d6d6d9;">#25</div>
<div style="position:absolute;top:688.24px;font-size:11.7px;color:#bdbdc2;font-family:'Liberation Mono',monospace;white-space:nowrap;line-height:1;left:1008.16px;transform:scaleY(1.12);transform-origin:0 8.96px;-webkit-text-stroke:0.25px #bdbdc2;">12</div>
<svg style="position:absolute;left:1026.4px;top:687.7px" width="8" height="10" viewBox="0 0 8 10"><circle cx="3.7" cy="2.7" r="1.75" fill="#c2c2c6"/><path d="M0 9.4 C0.3 6.8 1.6 5.9 3.6 5.9 C5.6 5.9 6.9 6.8 7.2 9.4 Z" fill="#c2c2c6"/></svg>
<div style="position:absolute;top:773.64px;font-size:11.7px;color:#d6d6d9;font-family:'Liberation Mono',monospace;white-space:nowrap;line-height:1;left:1007.22px;transform:scaleY(1.12);transform-origin:0 8.96px;-webkit-text-stroke:0.25px #d6d6d9;">0.24</div>
<div style="position:absolute;left:1069px;top:184px;width:416px;height:503px;background:#14171d;border-radius:16px;border:1px solid #23272e;"></div>
<div style="position:absolute;left:1085px;top:201px;width:186.5px;height:71px;background:#1c1f27;border-radius:10px;border:1px solid #5a4a1c;"></div>
<div style="position:absolute;left:1281.5px;top:201px;width:186.5px;height:71px;background:#1c1f27;border-radius:10px;border:1px solid #34363b;"></div>
<div style="position:absolute;left:1085px;top:282px;width:186.5px;height:65.5px;background:#1c1f27;border-radius:10px;border:1px solid #34363b;"></div>
<div style="position:absolute;left:1281.5px;top:282px;width:186.5px;height:65.5px;background:#1c1f27;border-radius:10px;border:1px solid #34363b;"></div>
<svg style="position:absolute;left:1139.8px;top:219.8px" width="11.5" height="15.5" viewBox="0 0 12 16"><path d="M1.9 5.0 L6 1.3 L10.1 5.0 M1.9 11.1 L6 14.7 L10.1 11.1" fill="none" stroke="#f0b90b" stroke-width="2.0"/><path d="M1.4 6.6 L2.8 8.0 L1.4 9.4 L0 8.0 Z M10.6 6.6 L12 8.0 L10.6 9.4 L9.2 8.0 Z M6 6.5 L8.3 8.8 L6 11.1 L3.7 8.8 Z" fill="#f0b90b"/></svg>
<div style="position:absolute;top:219.68px;font-size:20px;color:#f0b90b;font-family:'Liberation Mono',monospace;white-space:nowrap;line-height:1;left:1159px;font-weight:bold;letter-spacing:0.3px;transform:scaleY(1.1);transform-origin:0 15.32px;">53.21</div>
<div style="position:absolute;top:246.81px;font-size:12px;color:#9c9ca1;font-family:'Liberation Mono',monospace;white-space:nowrap;line-height:1;left:1140px;letter-spacing:0.4px;transform:scaleY(1.1);transform-origin:0 9.19px;-webkit-text-stroke:0.25px #9c9ca1;">MOTHERLODE</div>
<div style="position:absolute;top:219.68px;font-size:20px;color:#ffffff;font-family:'Liberation Mono',monospace;white-space:nowrap;line-height:1;left:1344.5px;font-weight:bold;letter-spacing:0.3px;transform:scaleY(1.1);transform-origin:0 15.32px;">00:45</div>
<div style="position:absolute;top:246.81px;font-size:12px;color:#9c9ca1;font-family:'Liberation Mono',monospace;white-space:nowrap;line-height:1;left:1341px;letter-spacing:0.4px;transform:scaleY(1.1);transform-origin:0 9.19px;-webkit-text-stroke:0.25px #9c9ca1;">TIME LEFT</div>
<svg style="position:absolute;left:1148px;top:298.5px" width="11.2" height="15.5" viewBox="0 0 12 16"><path d="M1.9 5.0 L6 1.3 L10.1 5.0 M1.9 11.1 L6 14.7 L10.1 11.1" fill="none" stroke="#f0b90b" stroke-width="2.0"/><path d="M1.4 6.6 L2.8 8.0 L1.4 9.4 L0 8.0 Z M10.6 6.6 L12 8.0 L10.6 9.4 L9.2 8.0 Z M6 6.5 L8.3 8.8 L6 11.1 L3.7 8.8 Z" fill="#f0b90b"/></svg>
<div style="position:absolute;top:297.91px;font-size:18px;color:#18bc8a;font-family:'Liberation Mono',monospace;white-space:nowrap;line-height:1;left:1168px;font-weight:bold;letter-spacing:0.3px;transform:scaleY(1.1);transform-origin:0 13.79px;">5.23</div>
<div style="position:absolute;top:322.81px;font-size:12px;color:#9c9ca1;font-family:'Liberation Mono',monospace;white-space:nowrap;line-height:1;left:1137px;letter-spacing:0.3px;transform:scaleY(1.1);transform-origin:0 9.19px;-webkit-text-stroke:0.25px #9c9ca1;">ROUND TOTAL</div>
<svg style="position:absolute;left:1345px;top:298.5px" width="11.2" height="15.5" viewBox="0 0 12 16"><path d="M1.9 5.0 L6 1.3 L10.1 5.0 M1.9 11.1 L6 14.7 L10.1 11.1" fill="none" stroke="#18bc8a" stroke-width="2.0"/><path d="M1.4 6.6 L2.8 8.0 L1.4 9.4 L0 8.0 Z M10.6 6.6 L12 8.0 L10.6 9.4 L9.2 8.0 Z M6 6.5 L8.3 8.8 L6 11.1 L3.7 8.8 Z" fill="#18bc8a"/></svg>
<div style="position:absolute;top:297.91px;font-size:18px;color:#18bc8a;font-family:'Liberation Mono',monospace;white-space:nowrap;line-height:1;left:1365px;font-weight:bold;letter-spacing:0.2px;transform:scaleY(1.1);transform-origin:0 13.79px;">0.68</div>
<div style="position:absolute;top:322.81px;font-size:12px;color:#9c9ca1;font-family:'Liberation Mono',monospace;white-space:nowrap;line-height:1;left:1330px;letter-spacing:0.3px;transform:scaleY(1.1);transform-origin:0 9.19px;-webkit-text-stroke:0.25px #9c9ca1;">YOU DEPLOYED</div>
<div style="position:absolute;left:1085px;top:363px;width:383px;height:46px;background:#1c1f27;border-radius:10px;"></div>
<div style="position:absolute;left:1090px;top:368px;width:184.5px;height:36px;background:#463d22;border-radius:8px;"></div>
<div style="position:absolute;top:379.51px;font-size:15px;color:#f0b90b;font-family:'Liberation Mono',monospace;white-space:nowrap;line-height:1;left:1154px;font-weight:bold;letter-spacing:0.3px;transform:scaleY(1.1);transform-origin:0 11.49px;">MANUAL</div>
<div style="position:absolute;top:379.51px;font-size:15px;color:#a9a9ad;font-family:'Liberation Mono',monospace;white-space:nowrap;line-height:1;left:1352.5px;font-weight:bold;letter-spacing:0.3px;transform:scaleY(1.1);transform-origin:0 11.49px;">AUTO</div>
<div style="position:absolute;top:428.28px;font-size:14px;color:#a0a0a4;font-family:'Liberation Mono',monospace;white-space:nowrap;line-height:1;left:1085px;letter-spacing:-0.08px;transform:scaleY(1.1);transform-origin:0 10.72px;-webkit-text-stroke:0.25px #a0a0a4;">AMOUNT PER BLOCK</div>
<div style="position:absolute;left:1085px;top:449px;width:312px;height:48px;background:#1c1f27;border-radius:10px;border:1px solid #34363b;"></div>
<div style="position:absolute;top:465.31px;font-size:18px;color:#ffffff;font-family:'Liberation Mono',monospace;white-space:nowrap;line-height:1;left:1101.5px;transform:scaleY(1.1);transform-origin:0 13.79px;-webkit-text-stroke:0.6px #ffffff;">0.05</div>
<div style="position:absolute;top:466.15px;font-size:14px;color:#9a9a9e;font-family:'Liberation Sans',sans-serif;white-space:nowrap;line-height:1;left:1354px;-webkit-text-stroke:0.2px #9a9a9e;">BNB</div>
<div style="position:absolute;left:1408px;top:449px;width:60px;height:48px;background:#1c1f27;border-radius:10px;border:1px solid #34363b;"></div>
<div style="position:absolute;top:465.90px;font-size:15.8px;color:#e6e6e6;font-family:'Liberation Mono',monospace;white-space:nowrap;line-height:1;left:1423.5px;transform:scaleY(1.1);transform-origin:0 12.10px;-webkit-text-stroke:0.25px #e6e6e6;">MAX</div>
<div style="position:absolute;top:516.26px;font-size:15.2px;color:#a9a9ad;font-family:'Liberation Mono',monospace;white-space:nowrap;line-height:1;left:1085px;letter-spacing:0.13px;transform:scaleY(1.1);transform-origin:0 11.64px;-webkit-text-stroke:0.25px #a9a9ad;">Selected: <span style="color:#f0b90b;-webkit-text-stroke-color:#f0b90b">8 blocks</span></div>
<div style="position:absolute;top:516.26px;font-size:15.2px;color:#18bc8a;font-family:'Liberation Mono',monospace;white-space:nowrap;line-height:1;left:1376px;letter-spacing:0.2px;transform:scaleY(1.1);transform-origin:0 11.64px;-webkit-text-stroke:0.25px #18bc8a;">Select All</div>
<div style="position:absolute;left:1085px;top:548.5px;width:383.5px;height:51px;background:#1c1f27;border-radius:10px;"></div>
<div style="position:absolute;top:567.56px;font-size:15.2px;color:#a9a9ad;font-family:'Liberation Mono',monospace;white-space:nowrap;line-height:1;left:1095px;letter-spacing:0.28px;transform:scaleY(1.1);transform-origin:0 11.64px;-webkit-text-stroke:0.25px #a9a9ad;">Total Cost:</div>
<div style="position:absolute;top:565.88px;font-size:20px;color:#f0b90b;font-family:'Liberation Mono',monospace;white-space:nowrap;line-height:1;left:1359px;font-weight:bold;letter-spacing:0.4px;transform:scaleY(1.1);transform-origin:0 15.32px;">0.40 BNB</div>
<div style="position:absolute;left:1085px;top:614.5px;width:383px;height:56.5px;background:#f0b90b;border-radius:10px;"></div>
<svg style="position:absolute;left:1166px;top:634px" width="17" height="17" viewBox="0 0 24 24" fill="none" stroke="#1a1d25" stroke-width="2.2" stroke-linecap="round" stroke-linejoin="round"><path d="M4 14a1 1 0 0 1-.78-1.63l9.9-10.2a.5.5 0 0 1 .86.46l-1.92 6.02A1 1 0 0 0 13 10h7a1 1 0 0 1 .78 1.63l-9.9 10.2a.5.5 0 0 1-.86-.46l1.92-6.02A1 1 0 0 0 11 14z"/></svg>
<div style="position:absolute;top:634.51px;font-size:18px;color:#1a1d25;font-family:'Liberation Mono',monospace;white-space:nowrap;line-height:1;left:1195px;font-weight:bold;letter-spacing:-0.05px;transform:scaleY(1.1);transform-origin:0 13.79px;">DEPLOY TO 8 BLOCKS</div>
<div style="position:absolute;left:1069px;top:703px;width:416px;height:188px;background:#14171d;border-radius:16px;border:1px solid #1b5a48;"></div>
<svg style="position:absolute;left:1086px;top:720px" width="18.5" height="18.5" viewBox="0 0 24 24" fill="none" stroke="#18bc8a" stroke-width="2.1" stroke-linecap="round" stroke-linejoin="round"><circle cx="12" cy="12" r="10"/><g transform="translate(12 12) scale(0.78) translate(-12 -12)" stroke-width="2.9"><path d="M16 8h-6a2 2 0 1 0 0 4h4a2 2 0 1 1 0 4H8"/><path d="M12 18V6"/></g></svg>
<div style="position:absolute;top:722.74px;font-size:16px;color:#d9d9dc;font-family:'Liberation Mono',monospace;white-space:nowrap;line-height:1;left:1116px;letter-spacing:0.35px;transform:scaleY(1.1);transform-origin:0 12.26px;-webkit-text-stroke:0.25px #d9d9dc;">CLAIMABLE REWARDS</div>
<div style="position:absolute;left:1085px;top:750.5px;width:183.5px;height:67.5px;background:#1c1f27;border-radius:10px;border:1px solid #34363b;"></div>
<div style="position:absolute;left:1284.5px;top:750.5px;width:183.5px;height:67.5px;background:#1c1f27;border-radius:10px;border:1px solid #34363b;"></div>
<svg style="position:absolute;left:1140.3px;top:766px" width="12.4" height="16.6" viewBox="0 0 12 16"><path d="M1.9 5.0 L6 1.3 L10.1 5.0 M1.9 11.1 L6 14.7 L10.1 11.1" fill="none" stroke="#f0b90b" stroke-width="2.0"/><path d="M1.4 6.6 L2.8 8.0 L1.4 9.4 L0 8.0 Z M10.6 6.6 L12 8.0 L10.6 9.4 L9.2 8.0 Z M6 6.5 L8.3 8.8 L6 11.1 L3.7 8.8 Z" fill="#f0b90b"/></svg>
<div style="position:absolute;top:766.31px;font-size:18px;color:#f0b90b;font-family:'Liberation Mono',monospace;white-space:nowrap;line-height:1;left:1163.5px;font-weight:bold;transform:scaleY(1.1);transform-origin:0 13.79px;">0.234</div>
<div style="position:absolute;top:793.88px;font-size:10.3px;color:#9a9a9e;font-family:'Liberation Sans',sans-serif;white-space:nowrap;line-height:1;left:1166.5px;-webkit-text-stroke:0.15px #9a9a9e;">BNB</div>
<div style="position:absolute;top:766.31px;font-size:18px;color:#18bc8a;font-family:'Liberation Mono',monospace;white-space:nowrap;line-height:1;left:1340px;font-weight:bold;transform:scaleY(1.1);transform-origin:0 13.79px;">$</div>
<div style="position:absolute;top:766.31px;font-size:18px;color:#18bc8a;font-family:'Liberation Mono',monospace;white-space:nowrap;line-height:1;left:1358px;font-weight:bold;letter-spacing:0.2px;transform:scaleY(1.1);transform-origin:0 13.79px;">247.8</div>
<div style="position:absolute;top:793.88px;font-size:10.3px;color:#9a9a9e;font-family:'Liberation Sans',sans-serif;white-space:nowrap;line-height:1;left:1366px;-webkit-text-stroke:0.15px #9a9a9e;">BNR</div>
<div style="position:absolute;left:1085px;top:834px;width:383px;height:40.5px;background:#18bc8a;border-radius:10px;"></div>
<svg style="position:absolute;left:1222px;top:846.5px" width="16" height="16" viewBox="0 0 24 24" fill="none" stroke="#ffffff" stroke-width="1.9" stroke-linecap="round" stroke-linejoin="round"><path d="M20 6 9 17l-5-5"/></svg>
<div style="position:absolute;top:847.71px;font-size:15px;color:#ffffff;font-family:'Liberation Mono',monospace;white-space:nowrap;line-height:1;left:1250px;font-weight:bold;letter-spacing:0.2px;transform:scaleY(1.1);transform-origin:0 11.49px;">CLAIM ALL</div>
</body></html>
